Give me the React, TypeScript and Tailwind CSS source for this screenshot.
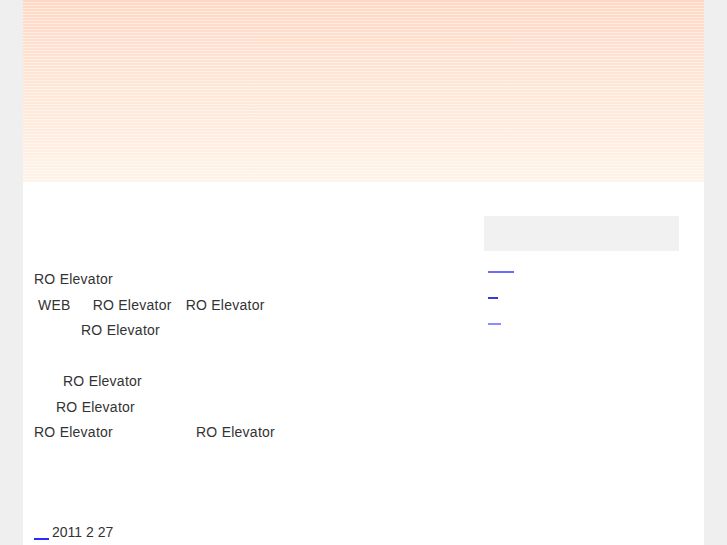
export default function App() {
  const gap = (w: string) => <span className={`inline-block ${w}`} />

  return (
    <div className="min-h-[545px] bg-[#efefef] font-['Liberation_Sans',Arial,sans-serif] text-[14px] text-[#333]">
      <div className="mx-auto w-[681px] min-h-[545px] bg-white">
        {/* header band */}
        <div className="h-[182px] bg-[repeating-linear-gradient(to_bottom,transparent_0px,transparent_2px,rgba(255,255,255,0.5)_2px,rgba(255,255,255,0.5)_3px),linear-gradient(to_bottom,#ffd8c4,#ffe6d6_50%,#fff3e8)]" />

        <div className="flex">
          {/* main */}
          <div className="w-[461px] pl-[11px] pt-[85px]">
            <div className="leading-[25.5px] tracking-[0.25px]">
              <div>RO Elevator</div>
              <div>
                {gap("w-[4px]")}WEB{gap("w-[22px]")}RO Elevator{gap("w-[14px]")}RO Elevator
              </div>
              <div>
                {gap("w-[47px]")}RO Elevator
              </div>
              <div>&nbsp;</div>
              <div>
                {gap("w-[29px]")}RO Elevator
              </div>
              <div>
                {gap("w-[22px]")}RO Elevator
              </div>
              <div>
                RO Elevator{gap("w-[83px]")}RO Elevator
              </div>
            </div>

            <div className="mt-[74px] flex items-center leading-[25.5px]">
              <span className="inline-block w-[15px] h-[2px] mt-[13px] bg-[#2a2aff] mr-[3px]" />
              <span>2011 2 27</span>
            </div>
          </div>

          {/* sidebar */}
          <div className="w-[195px] pt-[34px]">
            <div className="h-[35px] bg-[#f1f1f1]" />
            <div className="mt-[20px] pl-[4px] flex flex-col gap-[24px]">
              <div className="h-[2px] w-[26px] bg-[#6b6bff]" />
              <div className="h-[2px] w-[10px] bg-[#3a3ad8]" />
              <div className="h-[2px] w-[13px] bg-[#8c8cff]" />
            </div>
          </div>
        </div>
      </div>
    </div>
  )
}
